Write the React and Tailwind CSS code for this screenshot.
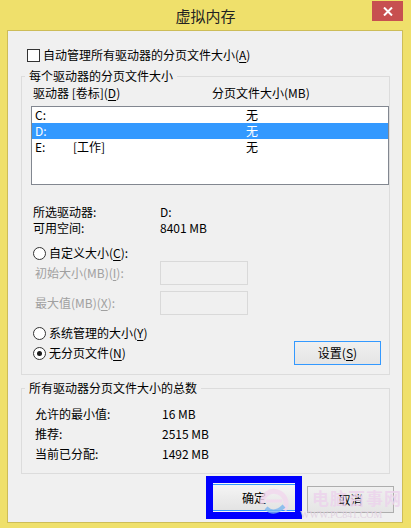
export default function App() {
  const U = ({ c }) => <span className="underline underline-offset-[2px]">{c}</span>;
  const Radio = ({ checked }) => (
    <span className="w-[13px] h-[13px] rounded-full border border-[#333] bg-white flex items-center justify-center shrink-0">
      {checked && <span className="w-[5px] h-[5px] rounded-full bg-[#1a1a1a]" />}
    </span>
  );
  return (
    <div className="relative w-[411px] h-[528px] bg-[#efe06b] overflow-hidden font-['Noto_Sans_CJK_SC','Microsoft_YaHei',sans-serif] text-[12px] leading-[16px] text-black">
      {/* title bar */}
      <div className="flex h-[30px]">
        <div className="w-[39px]" />
        <div className="flex-1 flex items-center justify-center text-[15px] text-[#222] pt-[1px]">虚拟内存</div>
        <div className="w-[31px] h-[20px] mt-[1px] mr-[8px] bg-[#c75050] flex items-center justify-center">
          <svg width="10" height="9" viewBox="0 0 10 9">
            <path d="M1 0.5 L9 8.5 M9 0.5 L1 8.5" stroke="white" strokeWidth="2" />
          </svg>
        </div>
      </div>

      {/* client */}
      <div className="ml-[7px] w-[396px] h-[493px] border border-[#cdbd58] bg-[#f0f0f0] flex flex-col">
        {/* auto checkbox */}
        <div className="flex items-center h-[16px] mt-[16px] pl-[19px] gap-[3px]">
          <span className="w-[13px] h-[13px] border border-[#333] bg-white shrink-0" />
          <span>自动管理所有驱动器的分页文件大小(<U c="A" />)</span>
        </div>

        {/* group 1 */}
        <div className="ml-[13px] mt-[13px] w-[369px] border border-[#dcdcdc] pb-[9px]">
          <div className="-mt-[9px] ml-[3px] px-[4px] w-fit h-[16px] bg-[#f0f0f0]">每个驱动器的分页文件大小</div>
          <div className="flex h-[16px] mt-[1px] pl-[11px]">
            <span className="w-[179px]">驱动器 [卷标](<U c="D" />)</span>
            <span>分页文件大小(MB)</span>
          </div>
          <div className="mt-[5px] ml-[9px] w-[358px] h-[79px] border border-[#828790] bg-white">
            <div className="flex h-[16px] pl-[3px]">
              <span className="w-[211px]">C:</span>
              <span>无</span>
            </div>
            <div className="flex h-[16px] pl-[3px] bg-[#3399ff] text-white">
              <span className="w-[211px]">D:</span>
              <span>无</span>
            </div>
            <div className="flex h-[16px] pl-[3px]">
              <span className="w-[211px] flex">
                <span className="w-[38px]">E:</span>
                <span>[工作]</span>
              </span>
              <span>无</span>
            </div>
          </div>

          <div className="mt-[19px] pl-[11px] flex h-[16px]">
            <span className="w-[127px]">所选驱动器:</span>
            <span>D:</span>
          </div>
          <div className="pl-[11px] flex h-[16px]">
            <span className="w-[127px]">可用空间:</span>
            <span>8401 MB</span>
          </div>

          <div className="mt-[9px] pl-[11px] flex items-center h-[16px] gap-[3px]">
            <Radio />
            <span>自定义大小(<U c="C" />):</span>
          </div>
          <div className="pl-[13px] flex items-center h-[24px] text-[#a0a0a0]">
            <span className="w-[125px]">初始大小(MB)(<U c="I" />):</span>
            <span className="w-[88px] h-[24px] border border-[#d9d9d9] bg-[#f0f0f0]" />
          </div>
          <div className="mt-[6px] pl-[13px] flex items-center h-[24px] text-[#a0a0a0]">
            <span className="w-[125px]">最大值(MB)(<U c="X" />):</span>
            <span className="w-[88px] h-[24px] border border-[#d9d9d9] bg-[#f0f0f0]" />
          </div>

          <div className="mt-[10px] pl-[11px] flex items-center h-[16px] gap-[3px]">
            <Radio />
            <span>系统管理的大小(<U c="Y" />)</span>
          </div>
          <div className="pl-[11px] flex items-center h-[24px]">
            <div className="flex items-center gap-[3px]">
              <Radio checked />
              <span>无分页文件(<U c="N" />)</span>
            </div>
            <div className="ml-auto mr-[8px] w-[87px] h-[24px] border border-[#3399ff] bg-gradient-to-b from-[#f0f0f0] to-[#e5e5e5] flex items-center justify-center">
              设置(<U c="S" />)
            </div>
          </div>
        </div>

        {/* group 2 */}
        <div className="ml-[13px] mt-[13px] w-[369px] border border-[#dcdcdc] pb-[9px]">
          <div className="-mt-[9px] ml-[3px] px-[4px] w-fit h-[16px] bg-[#f0f0f0]">所有驱动器分页文件大小的总数</div>
          <div className="mt-[8px]">
            <div className="pl-[13px] flex items-center h-[20px]">
              <span className="w-[127px]">允许的最小值:</span>
              <span>16 MB</span>
            </div>
            <div className="pl-[13px] flex items-center h-[20px]">
              <span className="w-[127px]">推荐:</span>
              <span>2515 MB</span>
            </div>
            <div className="pl-[13px] flex items-center h-[20px]">
              <span className="w-[127px]">当前已分配:</span>
              <span>1492 MB</span>
            </div>
          </div>
        </div>

        {/* buttons */}
        <div className="flex items-start justify-end mt-[2px] mr-[8px] gap-[5px]">
          <div className="w-[96px] h-[43px] border-[7px] border-[#0000ff] bg-[#f7f7f7] pt-[1px]">
            <div className="h-[27px] border-y border-[#3399ff] bg-gradient-to-b from-[#f5f5f5] to-[#e3e3e3] flex items-center justify-center">
              确定
            </div>
          </div>
          <div className="mt-[10px] w-[87px] h-[27px] border border-[#adadad] bg-gradient-to-b from-[#f0f0f0] to-[#e5e5e5] flex items-center justify-center">
            取消
          </div>
        </div>
      </div>

      {/* watermark overlay */}
      <div className="absolute left-[256px] top-[484px] w-[36px] h-[36px] opacity-80 pointer-events-none">
        <svg width="36" height="36" viewBox="0 0 36 36">
          <path d="M6 20 A12 12 0 1 1 28 26" fill="none" stroke="#f2d8ee" strokeWidth="5" />
          <path d="M10 24 Q18 32 28 22" fill="none" stroke="#7ab6f0" strokeWidth="4" />
          <path d="M10 17 L26 17" stroke="#f2d8ee" strokeWidth="3" />
        </svg>
      </div>
      <div className="absolute left-[312px] top-[487px] text-[17px] leading-[22px] font-bold tracking-[1px] text-[#ecd3ec]/85 pointer-events-none">电脑百事网</div>
      <div className="absolute left-[300px] top-[509px] text-[10px] leading-[12px] font-['Liberation_Serif',serif] text-[#e2d3e2] pointer-events-none">WWW.PC841.COM</div>
    </div>
  );
}
